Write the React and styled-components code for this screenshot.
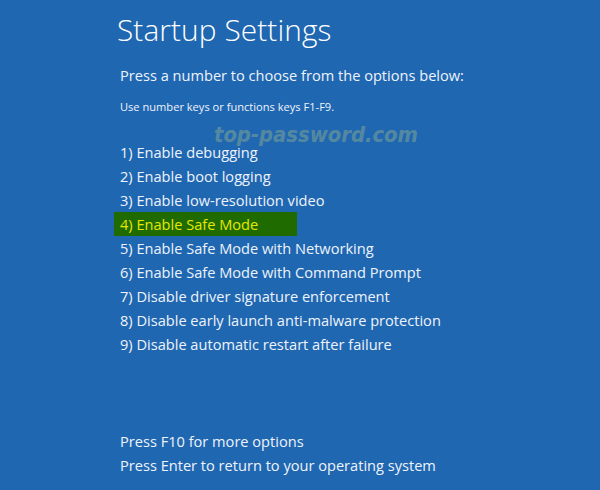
import React from "react";
import styled, { createGlobalStyle } from "styled-components";

const Global = createGlobalStyle`
  html, body { margin: 0; padding: 0; background: #2067b2; }
  body { font-family: "Open Sans", "Noto Sans", sans-serif; }
`;

const Screen = styled.div`
  position: relative;
  width: 600px;
  height: 490px;
  background: #2067b2;
  color: #ffffff;
  box-sizing: border-box;
  padding: 10px 0 0 114px;
  display: flex;
  flex-direction: column;
  overflow: hidden;
`;

const Title = styled.h1`
  margin: 0 0 0 3px;
  font-size: 29.8px;
  font-weight: 300;
  line-height: 40px;
  letter-spacing: 0.1px;
`;

const Prompt = styled.p`
  margin: 15px 0 0 6px;
  font-size: 14.6px;
  line-height: 20px;
  color: #eef3fa;
`;

const Hint = styled.p`
  margin: 14px 0 0 6px;
  font-size: 11.1px;
  line-height: 16px;
  color: #eef3fa;
`;

const Options = styled.ol`
  list-style: none;
  margin: 25px 0 0 0;
  padding: 0;
  display: flex;
  flex-direction: column;
`;

const Option = styled.li`
  width: 183px;
  height: 24px;
  box-sizing: border-box;
  padding-left: 6px;
  font-size: 14.6px;
  line-height: 24px;
  white-space: nowrap;
  color: ${(p) => (p.$selected ? "#e6e800" : "#eef3fa")};
  background: ${(p) => (p.$selected ? "#1f6b00" : "transparent")};
`;

const Footer = styled.div`
  margin-top: auto;
  margin-bottom: 13px;
  display: flex;
  flex-direction: column;
`;

const FooterLine = styled.div`
  padding-left: 6px;
  font-size: 14.6px;
  line-height: 24px;
  color: #eef3fa;
`;

const Watermark = styled.div`
  position: absolute;
  left: 214px;
  top: 124px;
  font-family: "DejaVu Sans Condensed", "DejaVu Sans", sans-serif;
  font-style: italic;
  font-weight: bold;
  font-size: 21.8px;
  line-height: 22px;
  color: rgba(120, 160, 150, 0.62);
  pointer-events: none;
`;

const items = [
  "1) Enable debugging",
  "2) Enable boot logging",
  "3) Enable low-resolution video",
  "4) Enable Safe Mode",
  "5) Enable Safe Mode with Networking",
  "6) Enable Safe Mode with Command Prompt",
  "7) Disable driver signature enforcement",
  "8) Disable early launch anti-malware protection",
  "9) Disable automatic restart after failure",
];

export default function App() {
  return (
    <>
      <Global />
      <Screen>
        <Title>Startup Settings</Title>
        <Prompt>Press a number to choose from the options below:</Prompt>
        <Hint>Use number keys or functions keys F1-F9.</Hint>
        <Options>
          {items.map((t, i) => (
            <Option key={t} $selected={i === 3}>
              {t}
            </Option>
          ))}
        </Options>
        <Footer>
          <FooterLine>Press F10 for more options</FooterLine>
          <FooterLine>Press Enter to return to your operating system</FooterLine>
        </Footer>
        <Watermark>top-password.com</Watermark>
      </Screen>
    </>
  );
}
